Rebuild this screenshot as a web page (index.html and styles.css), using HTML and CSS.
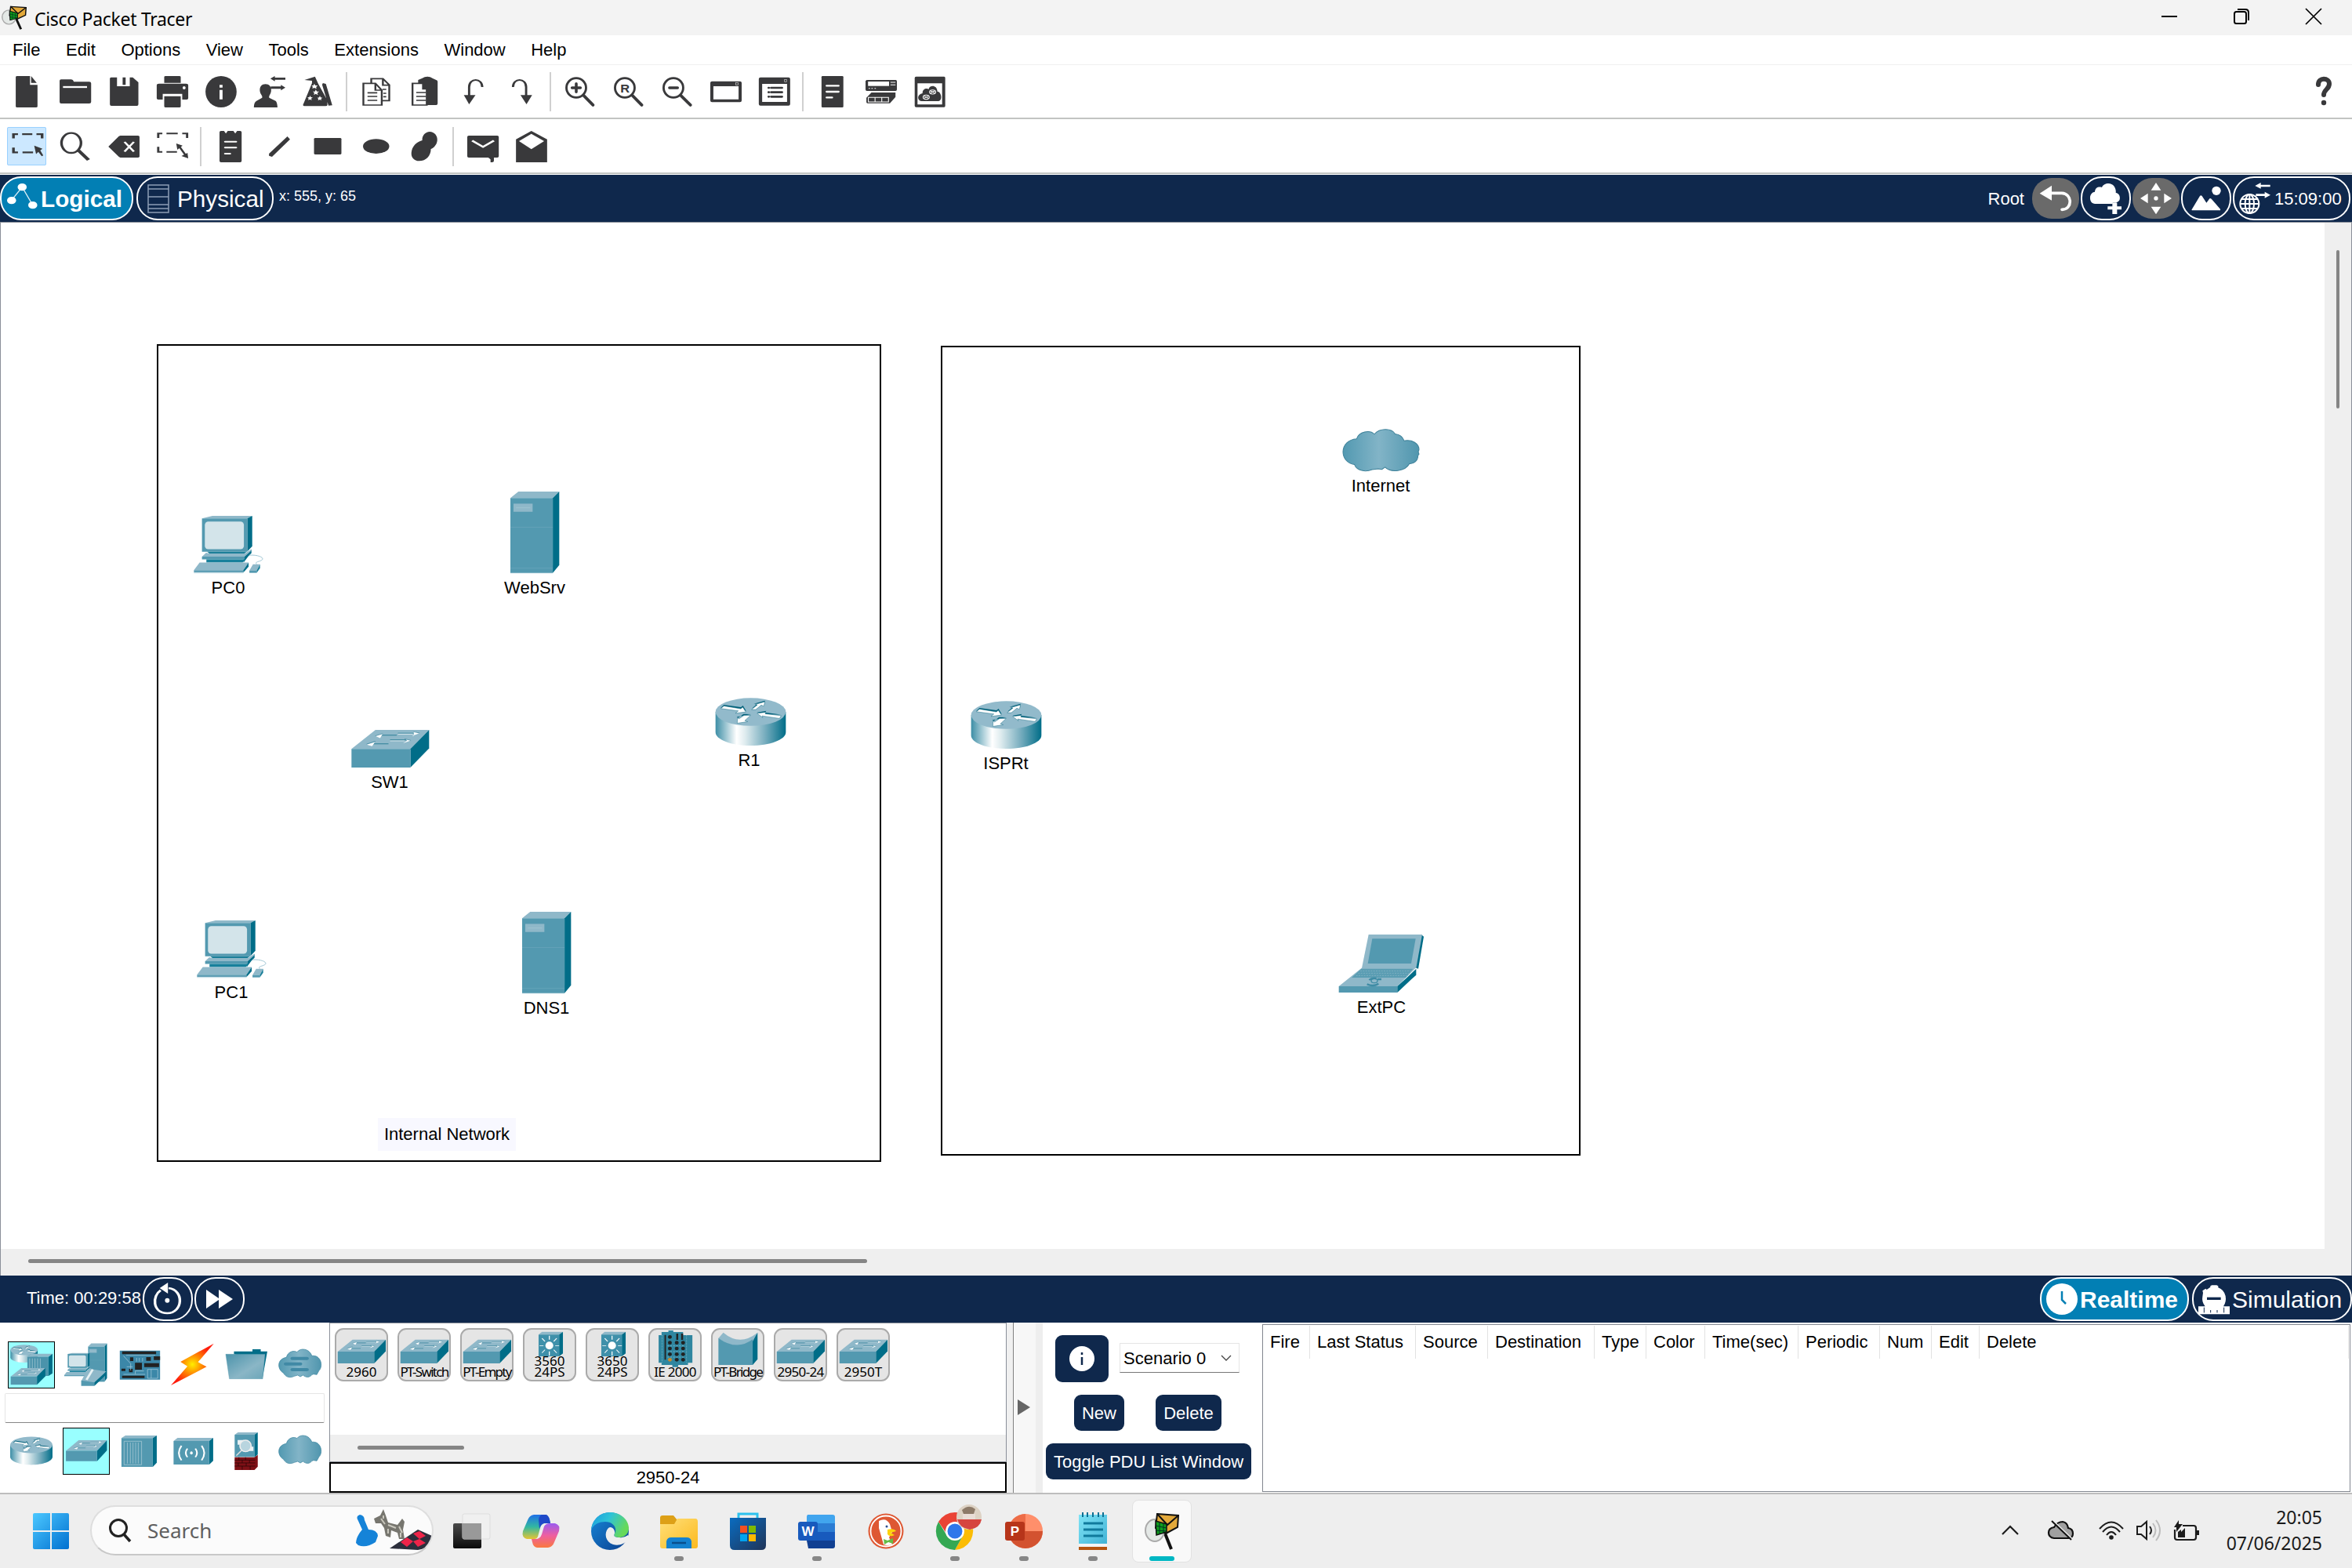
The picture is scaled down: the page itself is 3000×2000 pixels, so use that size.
FILE: index.html
```html
<!DOCTYPE html>
<html lang="en">
<head>
<meta charset="utf-8">
<title>Cisco Packet Tracer</title>
<link rel="stylesheet" href="styles.css">
</head>
<body>
<svg class="defs" aria-hidden="true">
  <defs>
    <linearGradient id="gRouter" x1="0" x2="1" y1="0" y2="0">
      <stop offset="0" stop-color="#3d8ea6"/><stop offset=".3" stop-color="#fff"/><stop offset=".42" stop-color="#dfecef"/><stop offset=".7" stop-color="#79aebf"/><stop offset="1" stop-color="#006d88"/>
    </linearGradient>
    <linearGradient id="gCloud" x1="0" x2="1" y1="0" y2="0">
      <stop offset="0" stop-color="#5299b1"/><stop offset=".47" stop-color="#82b4c7"/><stop offset="1" stop-color="#5096ae"/>
    </linearGradient>
    <linearGradient id="gFolder" x1="0" x2="1" y1="0" y2="1">
      <stop offset="0" stop-color="#4b93ab"/><stop offset=".6" stop-color="#8ab6c6"/><stop offset="1" stop-color="#6aa5b8"/>
    </linearGradient>
    <radialGradient id="gBolt" cx=".5" cy=".5" r=".5">
      <stop offset="0" stop-color="#ffee00"/><stop offset=".45" stop-color="#ff8a00"/><stop offset="1" stop-color="#ff1c0c"/>
    </radialGradient>
    <linearGradient id="gWin" x1="0" x2="1" y1="0" y2="1"><stop offset="0" stop-color="#4cc8ff"/><stop offset="1" stop-color="#0070d0"/></linearGradient>
    <linearGradient id="gCopA" x1="0" x2="0" y1="0" y2="1"><stop offset="0" stop-color="#1f6fe8"/><stop offset=".5" stop-color="#32b8a0"/><stop offset="1" stop-color="#e8c531"/></linearGradient>
    <linearGradient id="gCopB" x1="0" x2="0" y1="0" y2="1"><stop offset="0" stop-color="#9a5cf0"/><stop offset=".5" stop-color="#ee5fa0"/><stop offset="1" stop-color="#f9793f"/></linearGradient>
    <linearGradient id="gEdge" x1="0" x2="1" y1="0" y2=".4"><stop offset="0" stop-color="#1a9be0"/><stop offset=".5" stop-color="#2fc3d6"/><stop offset="1" stop-color="#66d95a"/></linearGradient>
    <linearGradient id="gEdge2" x1="0" x2="1" y1="0" y2="1"><stop offset="0" stop-color="#1787d8"/><stop offset="1" stop-color="#0b3f8f"/></linearGradient>
    <linearGradient id="gFold" x1="0" x2="1" y1="0" y2="1"><stop offset="0" stop-color="#ffe07a"/><stop offset="1" stop-color="#fcb91f"/></linearGradient>
    <linearGradient id="gStore" x1="0" x2="1" y1="0" y2="1"><stop offset="0" stop-color="#0a6cc0"/><stop offset="1" stop-color="#1f3458"/></linearGradient>
    <linearGradient id="gTaskA" x1="0" x2="0" y1="0" y2="1"><stop offset="0" stop-color="#4a4a4a"/><stop offset="1" stop-color="#0c0c0c"/></linearGradient>
    <linearGradient id="gNote" x1="0" x2="1" y1="0" y2="1"><stop offset="0" stop-color="#7fe3f5"/><stop offset="1" stop-color="#41b3d6"/></linearGradient>
  </defs>

  <symbol id="pc" viewBox="80 172 268 226" preserveAspectRatio="none">
    <path fill="#8fb8c9" d="M112 185 152 175H305L286 185Z"/>
    <path fill="#006d88" d="M286 185 305 175V292L286 312Z"/>
    <path fill="#5399b0" d="M112 185H286V313H112Z"/>
    <rect x="123" y="197" width="150" height="106" rx="13" fill="#d3e4ea"/>
    <path fill="#1c7f99" d="M132 313H284L275 320H140Z"/>
    <path fill="#006d88" d="M302 304V318L290 330 272 354V332Z"/>
    <path fill="#8fb8c9" d="M128 317 139 320H277L302 303V308L276 332H112Z"/>
    <path fill="#5399b0" d="M112 332H276V342H112Z"/>
    <path fill="#17809b" d="M129 342H280L268 354H129Z"/>
    <path fill="#8fb8c9" d="M103 354H291L271 384H81Z"/>
    <path fill="#5f9fb5" d="M81 384H271V393H81Z"/>
    <path fill="#c4dde6" d="M81 393H271V396H81Z"/>
    <path fill="#006d88" d="M291 354V370L271 393V384Z"/>
    <path fill="none" stroke="#9fc6d4" stroke-width="3" d="M294 326C330 324 350 336 344 343 336 352 312 350 322 361"/>
    <path fill="#8fb8c9" d="M308 361H335L322 385H294Z"/>
    <path fill="#5399b0" d="M294 385H322V394H294Z"/>
    <path fill="#1c7f99" d="M335 361V376L322 394V385Z"/>
  </symbol>

  <symbol id="server" viewBox="1290 81 194 317" preserveAspectRatio="none">
    <path fill="#8fb8c9" d="M1293 109 1324 84H1482L1457 109Z"/>
    <path fill="#006d88" d="M1457 109 1482 84V364L1457 394Z"/>
    <path fill="#5399b0" d="M1293 109H1457V395H1293Z"/>
    <path fill="#8fb8c9" d="M1305 130H1379V161H1305Z"/>
    <path stroke="#a9cad6" stroke-width="2" d="M1315 146H1370"/>
    <path stroke="#6ba8bc" stroke-width="2" d="M1293 220H1457M1293 376H1457"/>
    <path stroke="#c4dde6" stroke-width="2" d="M1293 395H1457"/>
  </symbol>

  <symbol id="switch" viewBox="682 993 304 149" preserveAspectRatio="none">
    <path fill="#8fb8c9" d="M686 1068 778 996H984L912 1068Z"/>
    <path fill="#006d88" d="M912 1068 984 996V1066L912 1139Z"/>
    <path fill="#5399b0" d="M686 1068H912V1139H686Z"/>
    <path stroke="#2f7f98" stroke-width="3" d="M800 1016H860M770 1049H828M864 1009H930M834 1034H900"/>
    <path stroke="#d3e4ea" stroke-width="3" d="M864 1012H922M834 1038H890"/>
    <path fill="#fff" d="M777 1019 806 1010 796 1027ZM744 1052 776 1042 765 1058ZM947 1009 925 1002V1019H918ZM914 1036 893 1030 900 1036 884 1047Z"/>
    <path fill="none" stroke="#2f7f98" stroke-width="2" d="M777 1019 806 1010M744 1050 778 1039M924 1003 947 1008M890 1030 914 1036"/>
  </symbol>

  <symbol id="router" viewBox="95 88 273 188" preserveAspectRatio="none">
    <path fill="url(#gRouter)" d="M97 145V222C97 250 157 273 231 273S366 250 366 222V145Z"/>
    <ellipse cx="231.500" cy="145" rx="134.500" ry="53" fill="#92bacb"/>
    <path fill="#006079" d="M117 129 129 118 194 127 202 121 214 141ZM237 131 257 113 243 114 286 102 284 116ZM347 155 275 155 256 147 291 141 287 147ZM233 154 204 153 183 168 178 164Z"/>
    <path fill="#fff" stroke="#1d7088" stroke-width="1.500" d="M117 132 129 122 194 133 201 127 213 145 173 150 184 141ZM235 136 257 118 249 116 286 106 282 123 272 119 251 136ZM348 159 342 170 275 160 278 167 256 150 289 146 287 152ZM231 158 206 158 187 171 181 168 180 188 220 182 209 178Z"/>
  </symbol>

  <symbol id="cloud" viewBox="94 50 297 166" preserveAspectRatio="none">
    <path fill="url(#gCloud)" stroke="#3e8199" stroke-width="3" d="M141 188C112 184 97 162 97 140 98 112 118 94 149 91 158 62 200 56 217 73 238 48 285 50 296 72 316 74 326 84 331 98 362 93 388 108 388 132L385 140 388 148 384 154C384 174 368 186 351 185 336 214 280 220 258 198L246 206 232 204 208 207C184 217 150 212 141 188Z"/>
  </symbol>

  <symbol id="laptop" viewBox="50 66 330 228" preserveAspectRatio="none">
    <path fill="#006d88" d="M368 69 377 77 356 200 345 196Z"/>
    <path fill="#8fb8c9" d="M166 69H371L348 197H140Z"/>
    <path fill="#5399b0" d="M180 85H346L329 180H163Z"/>
    <path fill="#8fb8c9" d="M142 195H348L276 267H52Z"/>
    <path fill="#5a9db3" d="M138 200H336L308 234H101Z"/>
    <path stroke="#8fb8c9" stroke-width="2" stroke-dasharray="6 4" d="M134 208H328M126 217H320M118 226H312"/>
    <path fill="#5399b0" d="M52 267H276V291H52Z"/>
    <path fill="#006d88" d="M348 200V224L330 240 276 291V267L310 236Z"/>
    <ellipse cx="188" cy="246" rx="12" ry="8" fill="none" stroke="#3f8ca5" stroke-width="4"/>
    <path fill="none" stroke="#3f8ca5" stroke-width="7" d="M168 243Q178 234 196 237M200 240H215M160 259Q184 270 204 257"/>
  </symbol>

  <symbol id="tracer" viewBox="0 0 44 48" preserveAspectRatio="none">
    <path d="M24 22 34 47" stroke="#111" stroke-width="4"/>
    <ellipse cx="13" cy="23" rx="12" ry="14" fill="#e4e8e6" stroke="#aaa" stroke-width="2"/>
    <path fill="#e3a93a" stroke="#111" stroke-width="2" d="M16 2 43 4 42 19 27 27 14 20Z"/>
    <path fill="none" stroke="#111" stroke-width="2" d="M16 2 29 16 43 4"/>
    <path fill="#0e9d1c" stroke="#111" stroke-width="1.500" d="M14 11 28 15V25L15 29Z"/>
    <path stroke="#032" stroke-width="1" d="M14 17 28 20M14 23 28 24M19 12V27M24 14V26"/>
  </symbol>

  <symbol id="layer3" viewBox="73 292 52 96" preserveAspectRatio="none">
    <path fill="#8fb8c9" d="M75 304 82 293H125L117 304Z"/><path fill="#006d88" d="M117 304 125 293V376L117 387Z"/><path fill="#3f90aa" d="M75 304H117V387H75Z"/>
    <path stroke="#fff" stroke-width="2" d="M97 308V323M97 368V384M77 346H85M109 346H117M82 318 88 330M112 318 106 330M82 374 88 362M112 374 106 362"/>
    <ellipse cx="97" cy="346" rx="8" ry="15" fill="#fff"/>
  </symbol>
</svg>

<div class="app">
  <header class="titlebar">
    <svg class="title-icon" width="32" height="31"><use href="#tracer"/></svg>
    <span class="title-text">Cisco Packet Tracer</span>
    <div class="window-controls">
      <svg width="20" height="20" viewBox="0 0 20 20"><path d="M0 10H20" stroke="#000" stroke-width="2"/></svg>
      <svg width="20" height="20" viewBox="0 0 20 20"><g fill="none" stroke="#000" stroke-width="2"><rect x="1" y="4" width="15" height="15" rx="2.500"/><path d="M5 1H15Q19 1 19 5V15"/></g></svg>
      <svg width="20" height="20" viewBox="0 0 20 20"><path d="M0 0 20 20M20 0 0 20" stroke="#000" stroke-width="1.700"/></svg>
    </div>
  </header>

  <nav class="menubar">
    <span>File</span><span>Edit</span><span>Options</span><span>View</span><span>Tools</span><span>Extensions</span><span>Window</span><span>Help</span>
  </nav>

  <div class="toolbar">
    <div class="tool"><svg preserveAspectRatio="none" viewBox="29.3 291 83.600 120"><path d="M46 291H80V325H100V407Q100 411 96 411H46Q42 411 42 407V295Q42 291 46 291ZM83 291 98 317H83Z"/></svg></div>
    <div class="tool"><svg preserveAspectRatio="none" viewBox="158.9 291 83.600 120"><path d="M159 309Q159 304 163 304H190Q195 304 197 313H238Q243 313 243 319V390Q243 396 238 396H163Q159 396 159 390Z"/><path d="M168 333H232" class="w" stroke-width="7"/></svg></div>
    <div class="tool"><svg preserveAspectRatio="none" viewBox="288.5 291 83.600 120"><path d="M296 296H312V330H346V296H354L369 315V399Q369 405 365 405H297Q293 405 293 399V301Q293 296 296 296ZM327 296H335V325H327Z"/></svg></div>
    <div class="tool"><svg preserveAspectRatio="none" viewBox="418.200 291 83.600 120"><path d="M438 294Q438 291 442 291H478Q482 291 482 294V317H438ZM418 326Q418 320 424 320H496Q502 320 502 326V376Q502 381 498 381H486V359H434V381H422Q418 381 418 376ZM438 368H482V407Q482 411 478 411H442Q438 411 438 407Z"/><ellipse cx="491" cy="336" rx="4" ry="6" fill="#fff"/></svg></div>
    <div class="tool"><svg preserveAspectRatio="none" viewBox="547.800 291 83.600 120"><ellipse cx="589.500" cy="351" rx="41.500" ry="60"/><path d="M589.500 325V335M589.500 344V380" class="w" stroke-width="8"/></svg></div>
    <div class="tool"><svg preserveAspectRatio="none" viewBox="677.400 291 83.600 120"><path d="M708 322C718 322 724 332 723 348 722 362 716 366 718 374L735 386Q739 390 740 411H677Q677 392 684 386L699 374C701 366 694 362 693 348 692 332 698 322 708 322ZM721 301 733 291V297H761V305H733V311ZM761 335 749 346V340H722V331H749V325Z"/></svg></div>
    <div class="tool"><svg preserveAspectRatio="none" viewBox="807 291 83.600 120"><path d="M812 306 840 293 849 322 873 384V402Q873 406 868 406H812Q808 406 808 401L812 388 832 318V309ZM861 318 869 321 886 403 876 404 859 324Z"/><path fill="#fff" d="M838 320 841 327 847 327 843 333 844 340 838 336 833 339 834 332 831 327H836ZM842 343 845 350 851 350 846 356 848 364 842 359 837 363 838 355 834 350H840ZM827 366 829 372 834 373 830 377 831 384 827 380 822 383 823 377 820 373 825 372ZM853 367 855 373 860 374 856 378 857 384 853 381 848 384 849 378 846 374 851 373Z"/></svg></div>
    <i class="sep"></i>
    <div class="tool"><svg preserveAspectRatio="none" viewBox="961.700 291 83.600 120"><g fill="#fff" stroke="#39393b" stroke-width="5"><path d="M990 301H1021L1038 325V385H990ZM1021 301V326H1038"/><path d="M969 319H1001L1018 345V402H969ZM1001 319V345H1018"/></g><path d="M980 355H1006M980 369H1006M980 384H1006M1020 342H1030M1022 357H1030M1022 370H1030" class="k" stroke-width="5"/></svg></div>
    <div class="tool"><svg preserveAspectRatio="none" viewBox="1091.300 291 83.600 120"><path d="M1115 306 1125 300Q1140 286 1154 300L1163 306Q1167 307 1167 312V396Q1167 402 1163 402H1115Z"/><path d="M1100 319H1128L1138 340V402H1100ZM1128 319V340H1138" fill="#fff" stroke="#39393b" stroke-width="5"/><path d="M1110 354H1136M1110 369H1136M1110 384H1136" class="k" stroke-width="5"/></svg></div>
    <div class="tool"><svg preserveAspectRatio="none" viewBox="1221 291 83.600 120"><path d="M1251 370V333C1251 297 1286 297 1286 333" class="k" stroke-width="6"/><path d="M1237 364H1268L1251 399Z"/></svg></div>
    <div class="tool"><svg preserveAspectRatio="none" viewBox="1350.600 291 83.600 120"><path d="M1368 333C1368 297 1403 297 1403 333V370" class="k" stroke-width="6"/><path d="M1388 364H1419L1404 399Z"/></svg></div>
    <i class="sep"></i>
    <div class="tool"><svg preserveAspectRatio="none" viewBox="56 291 112 120"><ellipse cx="98" cy="336" rx="35" ry="37" class="k" stroke-width="8"/><path d="M125 366 158 402" class="k r" stroke-width="11"/><path d="M83 336H113M98 320V352" class="k r" stroke-width="10"/></svg></div>
    <div class="tool"><svg preserveAspectRatio="none" viewBox="229.600 291 112 120"><ellipse cx="271.500" cy="336" rx="35" ry="37" class="k" stroke-width="8"/><path d="M299 366 332 402" class="k r" stroke-width="11"/><text x="272" y="353" class="reset">R</text></svg></div>
    <div class="tool"><svg preserveAspectRatio="none" viewBox="403.200 291 112 120"><ellipse cx="445" cy="336" rx="35" ry="37" class="k" stroke-width="8"/><path d="M472 366 506 402" class="k r" stroke-width="11"/><path d="M431 336H460" class="k r" stroke-width="10"/></svg></div>
    <div class="tool"><svg preserveAspectRatio="none" viewBox="577 291 112 120"><path fill-rule="evenodd" d="M583 311H683Q689 311 689 317V385Q689 391 683 391H583Q577 391 577 385V317Q577 311 583 311ZM588 330V380H678V330Z"/><rect x="668" y="316" width="8" height="9" fill="none" stroke="#ccc" stroke-width="2"/></svg></div>
    <div class="tool"><svg preserveAspectRatio="none" viewBox="750.400 291 112 120"><path fill-rule="evenodd" d="M756 296H856Q862 296 862 302V398Q862 404 856 404H756Q750 404 750 398V302Q750 296 756 296ZM762 321V390H851V321Z"/><path d="M794 336H833M794 353H833M794 370H833M785 336H786M785 353H786M785 370H786" class="k r" stroke-width="8"/><rect x="842" y="304" width="7" height="9" fill="none" stroke="#ccc" stroke-width="2"/></svg></div>
    <i class="sep"></i>
    <div class="tool"><svg preserveAspectRatio="none" viewBox="957.600 291 112 120"><rect x="974" y="291" width="78" height="120" rx="4"/><path d="M992 328H1035M992 351H1035M992 373H1012" class="w r" stroke-width="7"/></svg></div>
    <div class="tool"><svg preserveAspectRatio="none" viewBox="1131 291 112 120"><path d="M1135 306H1239Q1243 306 1243 311V343Q1243 348 1238 348H1136Q1131 348 1131 343V310ZM1152 354H1238V371L1218 395H1138Q1134 395 1134 390V374Z"/><path fill="#fff" d="M1140 312H1215V329H1140Z"/><path class="w" stroke-width="3" d="M1220 315H1238M1220 325H1238M1142 338H1147M1152 338H1157M1163 338H1168M1141 373H1213V390H1141ZM1165 373V390M1189 373V390"/></svg></div>
    <div class="tool"><svg preserveAspectRatio="none" viewBox="1305 291 112 120"><path fill-rule="evenodd" d="M1312 293H1412Q1416 293 1416 298V405Q1416 410 1412 410H1312Q1307 410 1307 405V298Q1307 293 1312 293ZM1317 319V400H1405V319Z"/><path d="M1331 387C1315 385 1315 360 1335 357 1334 340 1349 336 1357 341 1359 326 1386 322 1388 350 1402 350 1408 384 1392 387Z"/><g class="w" stroke-width="3"><ellipse cx="1371" cy="352" rx="11" ry="8"/><ellipse cx="1348" cy="372" rx="11" ry="8"/><path d="M1363 348 1379 356M1363 356 1379 348M1340 368 1356 376M1340 376 1356 368"/></g></svg></div>
    <div class="tool help"><svg viewBox="0 0 40 40"><path d="M13 11C13 1 27 2 27 10 27 17 20 17 20 24" class="k r" stroke-width="6"/><circle cx="20" cy="34" r="3.200"/></svg></div>
  </div>

  <div class="toolbar second">
    <div class="tool"><svg class="selected" preserveAspectRatio="none" viewBox="21 490 104 145"><path d="M38 533V517H50M61 517H88M99 517H114V533M38 568V586H50M62 586H90" class="k" stroke-width="7"/><path d="M93 560 115 572 109 578 117 597 113 600 104 584 98 592Z"/></svg></div>
    <div class="tool"><svg preserveAspectRatio="none" viewBox="158.900 501 83.600 120"><ellipse cx="190" cy="547" rx="26" ry="38" class="k" stroke-width="7"/><path d="M209 575 236 612" class="k" stroke-width="10"/></svg></div>
    <div class="tool"><svg preserveAspectRatio="none" viewBox="288.500 501 83.600 120"><path d="M289 561 317 521 321 519H368Q372 519 372 524V598Q372 603 368 603H321L317 600Z"/><path d="M332 543 357 580M357 543 332 580" class="w" stroke-width="6"/></svg></div>
    <div class="tool"><svg preserveAspectRatio="none" viewBox="418.200 501 83.600 120"><path d="M422 528V511H433M444 511H474M486 511H499V528M422 562V581H433M444 581H472M476 556 496 596" class="k" stroke-width="6"/><path d="M470 549 487 557 473 573ZM500 585 502 606 484 597Z"/></svg></div>
    <i class="sep"></i>
    <div class="tool"><svg preserveAspectRatio="none" viewBox="572.500 501 83.600 120"><path d="M589 501H597L602 511 607 501H622L627 511 632 501H640Q644 501 644 506V616Q644 621 640 621H589Q585 621 585 616V506Q585 501 589 501Z"/><path d="M600 542H629M600 565H629M600 588H613" class="w r" stroke-width="6"/></svg></div>
    <div class="tool"><svg preserveAspectRatio="none" viewBox="702.100 501 83.600 120"><path d="M766 522 773 533 725 600 717 596V588Z"/></svg></div>
    <div class="tool"><svg preserveAspectRatio="none" viewBox="831.700 501 83.600 120"><rect x="837" y="528" width="73" height="63" rx="4"/></svg></div>
    <div class="tool"><svg preserveAspectRatio="none" viewBox="961.700 501 83.600 120"><ellipse cx="1003" cy="560" rx="35" ry="28"/></svg></div>
    <div class="tool"><svg preserveAspectRatio="none" viewBox="1091.300 501 83.600 120"><path d="M1146 504C1158 504 1167 519 1166 537 1165 554 1157 566 1149 570 1149 596 1136 616 1118 616 1104 616 1096 602 1097 584 1099 560 1110 543 1126 537 1125 519 1134 505 1146 504Z"/></svg></div>
    <i class="sep"></i>
    <div class="tool"><svg preserveAspectRatio="none" viewBox="1246 501 83.600 120"><path d="M1250 519H1326Q1330 519 1330 524V598Q1330 603 1326 603H1317V616Q1317 621 1312 621H1308V610L1302 603H1250Q1246 603 1246 598V524Q1246 519 1250 519Z"/><path d="M1259 538 1288 562 1317 538" class="w" stroke-width="7"/></svg></div>
    <div class="tool"><svg preserveAspectRatio="none" viewBox="1375.700 501 83.600 120"><path d="M1376 533 1417 501 1459 533V621H1376Z"/><path fill="#fff" d="M1384 540 1417 512 1451 540 1417 571Z"/></svg></div>
  </div>

  <div class="navbar">
    <button class="pill active logical"><svg width="40" height="40" viewBox="19 699 83 120" preserveAspectRatio="none"><path d="M31 766 59 716 87 785" fill="none" stroke="#dceef5" stroke-width="3"/><g fill="#fff"><ellipse cx="59" cy="716" rx="12" ry="14"/><ellipse cx="31" cy="767" rx="12" ry="14"/><ellipse cx="87" cy="785" rx="12" ry="14"/></g></svg>Logical</button>
    <button class="pill physical"><svg width="28" height="37" viewBox="0 0 28 37"><path fill="none" stroke="#8d9db5" stroke-width="1.500" d="M1 1H27V36H1ZM1 6H27M1 16H27M1 26H27M1 31H27"/></svg>Physical</button>
    <span class="coords">x: 555, y: 65</span>
    <span class="root">Root</span>
    <div class="pill-gray"><svg width="60" height="52" viewBox="276 681 180 156"><path fill="#fff" d="M305 740 351 710V767Z"/><path fill="none" stroke="#fff" stroke-width="11" stroke-linecap="round" d="M345 739H390C430 741 432 802 390 802"/></svg></div>
    <button class="pill icon"><svg width="60" height="52" viewBox="468 681 180 156"><path fill="#fff" d="M517 780C500 778 497 765 498 753 500 741 508 735 516 734 517 718 530 713 543 717 550 700 578 696 590 713 596 722 597 730 596 737 616 741 615 768 604 772L598 776H584V780Z"/><path fill="#fff" d="M583 777H601V790H618V802H601V819H583V802H565V790H583Z"/></svg></button>
    <div class="pill-gray"><svg width="60" height="52" viewBox="660 681 180 156"><path fill="#fff" d="M750 699 769 728H731ZM750 820 769 791H731ZM690 759 719 740V778ZM810 759 781 740V778Z"/><circle cx="750" cy="759" r="8" fill="#fff"/></svg></div>
    <button class="pill icon"><svg width="60" height="52" viewBox="852 681 180 156"><circle cx="981" cy="730" r="17" fill="#fff"/><path fill="#fff" d="M886 803 918 750Q922 745 926 750L943 776 955 760Q958 757 962 761L996 800V805H888Z"/></svg></button>
    <button class="pill clock"><svg width="40" height="40" viewBox="1069 699 120 120"><g fill="none" stroke="#fff" stroke-width="6"><circle cx="1109" cy="780" r="36"/><ellipse cx="1109" cy="780" rx="17" ry="36"/><path d="M1109 744V816M1072 780H1146M1078 762H1140M1078 798H1140"/><path stroke-width="8" d="M1144 711H1188M1133 746H1175"/></g><path fill="#fff" d="M1130 711 1152 699V722ZM1189 746 1167 734V758Z"/></svg>15:09:00</button>
  </div>

  <main class="workspace">
    <div class="canvas">
      <div class="frame internal"></div>
      <div class="frame external"></div>
      <div class="node pc0"><svg width="89" height="75"><use href="#pc"/></svg><span>PC0</span></div>
      <div class="node websrv"><svg width="64" height="106"><use href="#server"/></svg><span>WebSrv</span></div>
      <div class="node sw1"><svg width="101" height="50"><use href="#switch"/></svg><span>SW1</span></div>
      <div class="node r1"><svg width="91" height="63"><use href="#router"/></svg><span>R1</span></div>
      <div class="node pc1"><svg width="89" height="75"><use href="#pc"/></svg><span>PC1</span></div>
      <div class="node dns1"><svg width="64" height="106"><use href="#server"/></svg><span>DNS1</span></div>
      <div class="node isprt"><svg width="91" height="63"><use href="#router"/></svg><span>ISPRt</span></div>
      <div class="node internet"><svg width="99" height="56"><use href="#cloud"/></svg><span>Internet</span></div>
      <div class="node extpc"><svg width="110" height="76"><use href="#laptop"/></svg><span>ExtPC</span></div>
      <div class="note">Internal Network</div>
    </div>
    <div class="vscroll"><div class="vthumb"></div></div>
    <div class="hscroll"><div class="hthumb"></div></div>
  </main>

  <div class="timebar">
    <span class="time">Time: 00:29:58</span>
    <button class="pill icon"><svg width="40" height="42" viewBox="462 110 95 126" preserveAspectRatio="none"><path fill="none" stroke="#fff" stroke-width="8" d="M488 139C462 160 462 226 508 227 556 226 560 138 512 131"/><path fill="#fff" d="M485 131 510 110V152Z"/><ellipse cx="508" cy="178" rx="7" ry="9" fill="#fff"/></svg></button>
    <button class="pill icon"><svg width="34" height="24" viewBox="0 0 34 24"><path fill="#fff" d="M0 0 16 11V0L34 12 16 24V13L0 24Z"/></svg></button>
    <button class="pill active realtime"><svg width="40" height="40" viewBox="0 0 40 40"><circle cx="20" cy="20" r="20" fill="#fff"/><path d="M20 10V21L25 26" fill="none" stroke="#027fb4" stroke-width="2.500"/></svg>Realtime</button>
    <button class="pill simulation"><svg width="40" height="40" viewBox="912 110 120 120"><path fill="#fff" d="M958 124V120L964 117H982L988 120V126Q1010 134 1016 158 1020 180 1008 198H1032V228H912V198H938Q924 180 928 160L930 146 928 138 940 130 944 134Z"/><path stroke="#0f284c" stroke-width="10" d="M945 168H998"/><path stroke="#0f284c" stroke-width="3" d="M934 202V222M1010 202V222M959 212V222M984 212V222"/></svg>Simulation</button>
  </div>

  <section class="dock">
    <div class="palette">
      <div class="tiles">
        <svg class="tile on" preserveAspectRatio="none" viewBox="23.800 333 142.500 180"><use href="#router" x="31" y="344" width="84" height="71"/><path fill="#8fb8c9" d="M83 392 96 380H159L147 392Z"/><path fill="#006d88" d="M147 392 159 380V455L147 465Z"/><path fill="#4a93ab" d="M83 392H147V465H83Z"/><path stroke="#a9cad6" stroke-width="2" d="M90 398V440M98 398V440M106 398V440M114 398V440M122 398V440"/><use href="#switch" x="31" y="434" width="107" height="66"/></svg>
        <svg class="tile" preserveAspectRatio="none" viewBox="190 333 142.500 180"><use href="#server" x="266" y="339" width="59" height="150"/><use href="#pc" x="194" y="376" width="92" height="92"/><path fill="#8fb8c9" d="M264 443 272 436 283 440 312 446 322 448 286 500H247V482Z"/><path fill="#5399b0" d="M246 482 286 490V503H246Z"/><path fill="#006d88" d="M286 490 322 448V460L286 503Z"/><path stroke="#e8f2f5" stroke-width="7" d="M262 480 281 440"/></svg>
        <svg class="tile" preserveAspectRatio="none" viewBox="351.600 333 142.500 180"><path fill="#3b87a8" d="M363 368H485V479H363Z"/><path fill="#222" d="M370 371H473V382H370ZM370 464H438V473H370ZM409 415H430V441H409ZM443 393H457V407H443ZM466 390H485V404H466ZM437 416H482V431H437ZM394 394H404V408H394ZM391 438H402V451H391ZM368 437H380V446H368Z"/><path stroke="#a3c9d8" stroke-width="2" fill="none" d="M374 388 396 418V444M414 396V410M422 396V410M432 396V410M447 440H478V474H447ZM384 430H402M436 446H410V458M458 440V474M374 459H440M382 386H470"/></svg>
        <svg class="tile" preserveAspectRatio="none" viewBox="513.200 333 142.500 180"><path fill="url(#gBolt)" d="M648 341 600 412 626 430 518 501 568 428 547 411Z"/></svg>
        <svg class="tile" preserveAspectRatio="none" viewBox="674.700 333 142.500 180"><path fill="#006d88" d="M709 382V371H765V363H790V371H810L795 476 770 400Z"/><path fill="url(#gFolder)" stroke="#4f93aa" stroke-width="1" d="M684 382H803L796 476H695Z"/></svg>
        <svg class="tile" preserveAspectRatio="none" viewBox="836.300 333 142.500 180"><path fill="url(#gCloud)" stroke="#4389a2" stroke-width="2" d="M859 454C840 440 838 400 868 394 872 372 890 366 900 374 910 356 938 360 945 388 974 384 980 430 966 446L960 460 950 458 946 460C938 472 928 472 918 462L910 468 902 462 892 466C878 474 866 470 859 454Z"/><path stroke="#4089a5" stroke-width="12" stroke-linecap="round" d="M886 398H930M866 419H910M886 441H930"/></svg>
      </div>
      <div class="filter"></div>
      <div class="tiles">
        <svg class="tile" preserveAspectRatio="none" viewBox="23.800 663 142.500 180"><use href="#router" x="30" y="695" width="130" height="112"/></svg>
        <svg class="tile on" preserveAspectRatio="none" viewBox="190 663 142.500 180"><use href="#switch" x="198" y="709" width="127" height="84"/></svg>
        <svg class="tile" preserveAspectRatio="none" viewBox="351.600 663 142.500 180"><path fill="#8fb8c9" d="M368 703 380 693H475L463 703Z"/><path fill="#006d88" d="M463 703 475 693V797L463 813Z"/><path fill="#5399b0" d="M368 703H463V813H368Z"/><path fill="none" stroke="#a9cad6" stroke-width="2" d="M376 715H429V805H376ZM386 720V800M395 720V800M403 720V800M411 720V800M419 720V800"/></svg>
        <svg class="tile" preserveAspectRatio="none" viewBox="513.200 663 142.500 180"><path fill="#8fb8c9" d="M526 714 538 702H646L634 714Z"/><path fill="#006d88" d="M634 714 646 702V790L634 804Z"/><path fill="#5399b0" d="M526 714H634V804H526Z"/><ellipse cx="580" cy="760" rx="4" ry="6" fill="#fff"/><path fill="none" stroke="#fff" stroke-width="5" d="M568 743Q558 760 568 776M592 743Q602 760 592 776M550 732Q534 760 550 788M611 732Q627 760 611 788"/></svg>
        <svg class="tile" preserveAspectRatio="none" viewBox="674.700 663 142.500 180"><path fill="#8fb8c9" d="M711 690 721 681H781L771 690Z"/><path fill="#5399b0" d="M711 690H771V775H711Z"/><path fill="#006d88" d="M771 690 781 681V766L771 776Z"/><path fill="#7e1016" d="M711 776H771L781 767V812L771 825H711Z"/><path stroke="#2a0507" stroke-width="2" d="M711 787H773M711 798H773M711 810H773M724 776V787M744 776V787M734 787V798M756 787V798M722 798V810M746 798V810M734 810V824M758 810V824"/><path fill="#e9f2f5" d="M720 710H740V728H720ZM750 736H768V752H750Z"/><ellipse cx="744" cy="733" rx="17" ry="22" fill="#b9d5df" stroke="#eee" stroke-width="4"/><path stroke="#ddd" stroke-width="4" d="M732 750 716 770"/></svg>
        <svg class="tile" preserveAspectRatio="none" viewBox="836.300 663 142.500 180"><path fill="url(#gCloud)" stroke="#4389a2" stroke-width="2" d="M859 784C840 770 838 730 868 724 872 702 890 696 900 704 910 686 938 690 945 718 974 714 980 760 966 776L960 790 950 788 946 790C938 802 928 802 918 792L910 798 902 792 892 796C878 804 866 800 859 784Z"/></svg>
      </div>
    </div>

    <div class="devices">
      <div class="device-list">
        <div class="cards">
          <div class="card"><svg preserveAspectRatio="none" viewBox="1015 282 162 144"><use href="#switch" x="1022" y="321" width="149" height="95"/></svg><span>2960</span></div>
          <div class="card"><svg preserveAspectRatio="none" viewBox="1015 282 162 144"><use href="#switch" x="1022" y="321" width="149" height="95"/></svg><span class="tight">PT-Switch</span></div>
          <div class="card"><svg preserveAspectRatio="none" viewBox="1015 282 162 144"><use href="#switch" x="1022" y="321" width="149" height="95"/></svg><span class="tight">PT-Empty</span></div>
          <div class="card two"><svg preserveAspectRatio="none" viewBox="43 282 109 102"><use href="#layer3" x="73" y="292" width="52" height="96"/></svg><span>3560<br>24PS</span></div>
          <div class="card two"><svg preserveAspectRatio="none" viewBox="43 282 109 102"><use href="#layer3" x="73" y="292" width="52" height="96"/></svg><span>3650<br>24PS</span></div>
          <div class="card"><svg preserveAspectRatio="none" viewBox="299 282 109 144"><path fill="#2f86a0" d="M320 306H326V294H340V288H350V294H370V306H389V412H380V420H360V428H348V420H326V412H320Z"/><g fill="#222"><ellipse cx="343" cy="335" rx="4" ry="7"/><ellipse cx="357" cy="335" rx="4" ry="7"/><ellipse cx="370" cy="335" rx="4" ry="7"/><ellipse cx="343" cy="357" rx="4" ry="7"/><ellipse cx="357" cy="357" rx="4" ry="7"/><ellipse cx="370" cy="357" rx="4" ry="7"/><ellipse cx="343" cy="379" rx="4" ry="7"/><ellipse cx="357" cy="379" rx="4" ry="7"/><ellipse cx="370" cy="379" rx="4" ry="7"/><ellipse cx="357" cy="400" rx="4" ry="7"/><ellipse cx="370" cy="400" rx="4" ry="7"/><ellipse cx="343" cy="313" rx="4" ry="7"/><path d="M356 300H360V324H356ZM366 300H370V324H366ZM332 305H335V400H332Z"/></g><ellipse cx="343" cy="400" rx="4" ry="7" fill="#c98a2c"/><path stroke="#8fc0cf" stroke-width="1.500" stroke-dasharray="3 3" d="M327 306V410M377 306V410M338 347H374M338 369H374M338 390H374"/></svg><span class="snug">IE 2000</span></div>
          <div class="card"><svg preserveAspectRatio="none" viewBox="427 282 109 144"><path fill="#006d88" d="M512 322 522 296V398L512 420Z"/><path fill="#8fb8c9" d="M442 318 452 296Q486 350 522 296L512 330Q480 370 442 318Z"/><path fill="#5399b0" d="M442 317Q480 368 512 322V420H442Z"/></svg><span class="tight">PT-Bridge</span></div>
          <div class="card"><svg preserveAspectRatio="none" viewBox="1015 282 162 144"><use href="#switch" x="1022" y="321" width="149" height="95"/></svg><span class="snug">2950-24</span></div>
          <div class="card"><svg preserveAspectRatio="none" viewBox="1015 282 162 144"><use href="#switch" x="1022" y="321" width="149" height="95"/></svg><span>2950T</span></div>
        </div>
        <div class="dscroll"><div class="dthumb"></div></div>
      </div>
      <div class="device-name">2950-24</div>
    </div>

    <div class="splitter"><svg width="16" height="20" viewBox="0 0 16 20"><path fill="#666" d="M0 0 16 10 0 20Z"/></svg></div>

    <div class="scenario">
      <div class="srow first">
        <button class="btn info"><svg width="34" height="34" viewBox="0 0 34 34"><circle cx="17" cy="17" r="16" fill="#fff"/><path d="M17 9V12M17 15V25" stroke="#0f284c" stroke-width="2.500"/></svg></button>
        <div class="select"><span>Scenario 0</span><svg width="14" height="8" viewBox="0 0 14 8"><path d="M1 1 7 7 13 1" fill="none" stroke="#444" stroke-width="1.300"/></svg></div>
      </div>
      <div class="srow second-row"><button class="btn new">New</button><button class="btn delete">Delete</button></div>
      <button class="btn toggle">Toggle PDU List Window</button>
    </div>

    <div class="pdu">
      <div class="pdu-head"><span>Fire</span><span>Last Status</span><span>Source</span><span>Destination</span><span>Type</span><span>Color</span><span>Time(sec)</span><span>Periodic</span><span>Num</span><span>Edit</span><span>Delete</span></div>
    </div>
  </section>

  <footer class="taskbar">
    <svg class="start" width="46" height="46" viewBox="0 0 46 46"><path fill="url(#gWin)" d="M2 0H22V22H0V2Q0 0 2 0ZM24 0H44Q46 0 46 2V22H24ZM0 24H22V46H2Q0 46 0 44ZM24 24H46V44Q46 46 44 46H24Z"/></svg>
    <div class="search">
      <svg width="30" height="30" viewBox="0 0 30 30"><circle cx="13" cy="12" r="10.500" fill="none" stroke="#222" stroke-width="3"/><path d="M20 20 28 29" stroke="#222" stroke-width="3.500"/></svg>
      <span>Search</span>
      <svg class="dog" width="98" height="54" viewBox="0 0 98 54"><path fill="#2c2f3c" d="M44 50 80 26 98 34V42Q92 50 80 52Z"/><path fill="#ee2449" d="M58 42 66 36 74 41 66 48ZM74 31 82 28 90 34 82 38ZM74 41 82 38 90 43 80 48Z"/><path fill="#1583d8" d="M1 43C2 34 6 30 9 26L4 15Q0 9 6 7 12 8 12 14L17 26Q28 26 29 34L26 42Q14 50 4 46Z"/><path fill="#77766f" d="M24 12 32 8 36 0 39 8 42 17 54 20 60 12 63 16 61 26 63 38 56 38 54 30 46 27 45 36 39 34 37 24 33 18 26 18Z"/><path stroke="#c9c7bd" stroke-width="2" d="M33 12 38 19M42 20 52 24M56 22 60 30M42 25V31M36 8V12M58 30V36"/></svg>
    </div>
    <div class="apps">
      <div class="appicon"><svg viewBox="0 0 48 48"><rect x="0" y="14" width="36" height="32" rx="2" fill="url(#gTaskA)"/><rect x="12" y="2" width="35" height="32" rx="2" fill="#f0f0f0" stroke="#ddd"/><path d="M12 14H36V34H12Z" fill="#999"/></svg></div>
      <div class="appicon"><svg viewBox="0 0 48 48"><path fill="url(#gCopA)" d="M15 3H29Q34 4 35 10L36 14H28Q24 15 23 20L20 31Q18 35 12 34H6Q-1 32 1 24L7 10Q9 4 15 3Z"/><path fill="url(#gCopB)" d="M33 45H19Q14 44 13 38L12 34H17Q23 34 25 28L28 18Q30 14 36 14H42Q49 16 47 24L41 38Q39 44 33 45Z"/><path fill="#1f49c8" d="M25 3H31Q35 5 36 14H28Q24 15 22 21L21 10Q21 5 25 3Z"/></svg></div>
      <div class="appicon"><svg viewBox="0 0 48 48"><circle cx="24" cy="24" r="24" fill="url(#gEdge2)"/><path fill="url(#gEdge)" d="M0 22C2 8 12 0 24 0 38 0 48 10 48 20 48 28 42 32 36 32 30 32 28 30 30 27 34 20 28 12 18 12 9 12 3 16 0 22Z"/><path fill="#eee" d="M22 20C16 26 18 38 28 41 36 43 42 40 46 36L49 33 47 29Q42 33 36 32C30 32 28 30 30 27 31 22 26 17 22 20Z"/></svg></div>
      <div class="appicon run"><svg viewBox="0 0 48 48"><path fill="#dda017" d="M0 7Q0 4 3 4H17L22 10V18H0Z"/><path fill="url(#gFold)" d="M0 15H18L22 8H45Q48 8 48 12V43Q48 46 45 46H3Q0 46 0 43Z"/><path fill="#1481cf" d="M8 46V37Q9 32 14 32H34Q39 32 40 37V46Z"/><path stroke="#0a4f8c" stroke-width="2.500" d="M15 39H33"/></svg></div>
      <div class="appicon"><svg viewBox="0 0 48 48"><path fill="none" stroke="#2cc1ee" stroke-width="3" d="M12 12V2H36V12"/><path fill="url(#gStore)" d="M1 7H47V42Q47 48 41 48H7Q1 48 1 42Z"/><path fill="#f25022" d="M14 17H23V26H14Z"/><path fill="#7fba00" d="M25 17H34V26H25Z"/><path fill="#00a4ef" d="M14 28H23V37H14Z"/><path fill="#ffb900" d="M25 28H34V37H25Z"/></svg></div>
      <div class="appicon run"><svg viewBox="0 0 48 48"><path fill="#41a5ee" d="M12 3H44Q47 3 47 6V14H11V5Z"/><path fill="#2b7cd3" d="M11 14H47V25H11Z"/><path fill="#185abd" d="M11 25H47V36H11Z"/><path fill="#103f91" d="M11 36H47V43Q47 46 44 46H13Z"/><rect x="0" y="12" width="25" height="24" rx="3" fill="#185abd"/><text x="12.500" y="30" class="glyph">W</text></svg></div>
      <div class="appicon"><svg viewBox="0 0 48 48"><circle cx="24" cy="24" r="22.500" fill="#de5833"/><circle cx="24" cy="24" r="19.500" fill="none" stroke="#fff" stroke-width="1.800"/><path fill="#fff" d="M15 11Q24 6 29 15L32 25 28 32 32 41Q26 43 21 41L15 20Z"/><path fill="#fdd20a" d="M26 22Q34 20 37 24L30 26 35 29Q29 32 26 28Z"/><path fill="#65bc46" d="M21 34 26 36 33 33V40L27 38 22 41Z"/><circle cx="25" cy="18" r="1.500" fill="#2d4f8e"/></svg></div>
      <div class="appicon run"><svg viewBox="0 0 48 48"><path fill="#fbbc04" d="M24 13H45Q50 24 44 36 37 47 24 48L34 30Z"/><path fill="#34a853" d="M3 12A24 24 0 0 0 24 48L34 30 14 30Z"/><path fill="#ea4335" d="M3 12Q11 0 24 0 38 0 45 13H24L14 28Z"/><circle cx="24" cy="24" r="12" fill="#fff"/><circle cx="24" cy="24" r="9.500" fill="#2f77ea"/><circle cx="42" cy="6" r="16" fill="#ddd2c4"/><path fill="#d6453f" d="M27 9H58Q56 20 43 22 30 20 27 9Z"/><path fill="#8d7a68" d="M33 -3Q42 -11 50 -4L48 2H35Z"/><path fill="#e9ddd6" d="M34 2H50V9H34Z"/></svg></div>
      <div class="appicon run"><svg viewBox="0 0 48 48"><circle cx="26" cy="24" r="22" fill="#ff8f6b"/><path fill="#d35230" d="M26 24H48A22 22 0 0 1 26 46 22 22 0 0 1 4 24Z"/><path fill="#ed6c47" d="M26 24V2A22 22 0 0 0 4 24Z"/><rect x="0" y="12" width="25" height="24" rx="3" fill="#b7351a"/><text x="12.500" y="30" class="glyph">P</text></svg></div>
      <div class="appicon run"><svg viewBox="0 0 48 48"><path fill="url(#gNote)" d="M6 3H42V40H6Z"/><path fill="#f4f4f4" d="M6 40H42V44H6Z"/><path fill="#b5540f" d="M6 44H42V48H6Z"/><path stroke="#0b6f93" stroke-width="2" d="M11 0V6M17 0V6M24 0V6M31 0V6M37 0V6"/><path stroke="#107a9c" stroke-width="3" d="M12 14H37M12 22H37M12 30H37"/></svg></div>
      <div class="appicon current"><svg viewBox="0 0 48 48"><use href="#tracer" x="2" y="0" width="44" height="48"/></svg></div>
    </div>
    <div class="tray">
      <svg width="22" height="13" viewBox="0 0 22 13"><path d="M1 12 11 2 21 12" fill="none" stroke="#1c1c1c" stroke-width="2.200"/></svg>
      <svg width="33" height="26" viewBox="0 0 33 26"><path d="M8 23Q1 22 1 16T8 9Q12 2 19 2 25 3 26 10 32 11 32 17T26 23Z" fill="#a0a0a0" stroke="#111" stroke-width="2.200"/><path d="M7 1 32 25" stroke="#eee" stroke-width="2"/><path d="M5 1 30 25" stroke="#111" stroke-width="2"/></svg>
      <svg width="32" height="24" viewBox="0 0 32 24"><g fill="none" stroke="#1c1c1c" stroke-width="2"><path d="M1 10Q16 -7 31 10M5 14Q16 1 27 14M10 18Q16 10 22 18"/></g><circle cx="16" cy="21" r="2.800" fill="#1c1c1c"/></svg>
      <svg width="33" height="27" viewBox="0 0 33 27"><g fill="none" stroke-width="2"><path stroke="#1c1c1c" d="M1 9H6L13 3V25L6 19H1ZM17 9Q21 14 17 19"/><path stroke="#bdbdbd" d="M21 5Q28 14 21 23M25 1Q35 14 25 27"/></g></svg>
      <svg width="33" height="26" viewBox="0 0 33 26"><path fill="none" stroke="#1c1c1c" stroke-width="2.200" d="M11 7H25Q28 7 28 10V22Q28 25 25 25H4Q1 25 1 22V12"/><path fill="#1c1c1c" d="M28 13H32V19H28ZM5 22V15L9 12V15L14 10V22ZM6 0V5H11L3 15V9H0Z"/></svg>
      <div class="datetime"><span>20:05</span><span>07/06/2025</span></div>
    </div>
  </footer>
</div>
</body>
</html>
```

FILE: styles.css
```css
* { box-sizing: border-box; }
body { margin: 0; background: #fff; }
svg { display: block; flex: none; overflow: visible; }
.defs { position: absolute; width: 0; height: 0; }

.app {
  width: 3000px; height: 2000px; overflow: hidden;
  display: flex; flex-direction: column;
  font: 22px/25px "Liberation Sans", Arial, sans-serif; color: #000;
}
button { border: 0; padding: 0; background: none; color: inherit; font: inherit; white-space: nowrap; }

/* title bar */
.titlebar { height: 45px; flex: none; background: #f3f3f3; display: flex; align-items: center; padding-left: 2px; }
.title-text { font: 23px/30px "Noto Sans", sans-serif; margin: 2px 0 0 10px; letter-spacing: -0.3px; white-space: nowrap; }
.window-controls { margin: -3px 39px 0 auto; display: flex; gap: 72px; }

/* menu */
.menubar { height: 38px; flex: none; display: flex; align-items: center; gap: 32.500px; padding-left: 16px; border-bottom: 1px solid #f0f0f0; }

/* tool bars */
.toolbar { height: 69px; flex: none; display: flex; align-items: center; padding: 1px 0 0 3px; border-bottom: 2px solid #c2c4c2; }
.toolbar.second { height: 70px; margin-bottom: 1px; }
.tool { width: 62px; height: 50px; flex: none; display: flex; align-items: center; justify-content: center; }
.tool svg { width: 40px; height: 40px; fill: #39393b; }
.tool svg.selected { width: 50px; height: 49px; background: #cce8ff; outline: 1px solid #99d1ff; outline-offset: -1px; border-radius: 2px; }
.tool.help { margin: 0 5px 0 auto; }
.k { fill: none; stroke: #39393b; }
.w { fill: none; stroke: #fff; }
.r { stroke-linecap: round; }
.reset { font: bold 46px "Liberation Sans", sans-serif; text-anchor: middle; }
.sep { width: 12px; height: 50px; flex: none; background: linear-gradient(#d0d0d0, #d0d0d0) 4px 0 / 2px 100% no-repeat; }

/* navigation bar */
.navbar, .timebar { height: 60px; flex: none; background: #0f284c; color: #fff; display: flex; align-items: center; }
.pill { height: 56px; border: 2px solid #fff; border-radius: 27px; display: flex; align-items: center; font-size: 29.700px; flex: none; }
.pill.active { background: #027fb4; font-weight: bold; }
.logical { width: 170px; padding-left: 7px; gap: 3px; }
.physical { width: 175px; margin-left: 4px; padding-left: 12px; gap: 10px; }
.coords { font-size: 18px; margin: -5px auto 0 7px; }
.root { margin-right: 8px; }
.pill-gray { width: 60px; height: 52px; border-radius: 25px; background: #6a6a6a; margin: 0 2px; flex: none; }
.pill.icon { width: 64px; justify-content: center; }
.clock { width: 150px; margin: 0 2px; padding-left: 6px; gap: 5px; font-size: 22px; }

/* workspace */
.workspace {
  height: 1344px; flex: none; display: grid;
  grid-template: 1309px 34px / 2964px 34px;
  border: 1px solid #8a8f99; border-bottom: 0;
}
.canvas { position: relative; }
.frame { position: absolute; border: 2px solid #000; }
.frame.internal { left: 199px; top: 155px; width: 924px; height: 1043px; }
.frame.external { left: 1199px; top: 157px; width: 816px; height: 1033px; }
.node { position: absolute; display: flex; flex-direction: column; align-items: center; gap: 5px; width: 120px; }
.node.pc0 { left: 230px; top: 373px; }
.node.websrv { left: 621px; top: 342px; }
.node.sw1 { left: 436px; top: 646px; }
.node.r1 { left: 896px; top: 605px; }
.node.pc1 { left: 234px; top: 889px; }
.node.dns1 { left: 636px; top: 878px; }
.node.isprt { left: 1222px; top: 609px; }
.node.internet { left: 1700px; top: 262px; }
.node.extpc { left: 1701px; top: 907px; }
.r1 span { margin-left: -3px; }
.note { position: absolute; left: 481px; top: 1142px; width: 176px; height: 42px; line-height: 42px; text-align: center; background: #f8f8ff; }
.vscroll, .hscroll { background: #efefef; }
.hscroll { grid-column: 1 / 3; padding: 13px 0 0 35px; }
.vscroll { padding: 35px 0 0 15px; }
.hthumb { width: 1070px; height: 5px; border-radius: 3px; background: #858585; }
.vthumb { width: 4px; height: 202px; border-radius: 2px; background: #858585; }

/* time bar */
.time { margin: -4px 2px 0 34px; width: 146px; white-space: nowrap; }
.timebar .icon { margin-right: 2px; }
.timebar .pill { font-size: 30px; }
.realtime { width: 190px; margin-left: auto; padding-left: 6px; gap: 3px; }
.simulation { width: 204px; margin-left: 4px; padding-left: 6px; gap: 3px; }

/* dock */
.dock { height: 217px; flex: none; display: flex; }
.palette { width: 420px; padding-top: 24px; }
.tiles { display: grid; grid-template-columns: 70px 68px 68px 68px 68px 68px; padding-left: 10px; height: 60px; }
.tile { width: 60px; height: 60px; }
.tile.on { background: #99ffff; outline: 1px solid #000; outline-offset: -1px; }
.filter { margin: 6px 6px; width: 408px; height: 38px; border: 1px solid #e5e5e5; border-bottom-color: #868686; border-radius: 2px; }
.devices { width: 864px; display: flex; flex-direction: column; }
.device-list { height: 178px; border: 1px solid #8a8f99; display: flex; flex-direction: column; justify-content: space-between; }
.cards { display: flex; gap: 12px; padding: 6px 0 0 6px; }
.card {
  width: 68px; height: 68px; flex: none; border: 2px solid #aaa; border-radius: 11px; background: #e5e5e5;
  display: flex; flex-direction: column; align-items: center;
  font: 17px/14px "Noto Sans", sans-serif; text-align: center; white-space: nowrap;
}
.card svg { width: 68px; height: 48px; margin-top: -1px; }
.card.two svg { height: 34px; }
.card .tight { letter-spacing: -1.700px; }
.card .snug { letter-spacing: -0.700px; }
.dscroll { height: 34px; background: #efefef; padding: 14px 0 0 35px; }
.dthumb { width: 136px; height: 5px; border-radius: 3px; background: #858585; }
.device-name { height: 39px; border: 2px solid #000; display: flex; align-items: center; justify-content: center; }
.splitter {
  width: 46px; display: flex; align-items: center; padding: 0 0 0 14px;
  background: linear-gradient(90deg, #f0f0f0 8px, #808080 8px, #808080 9px, #f7f7f7 9px, #f7f7f7 37px, #eeeeee 37px);
}
.splitter svg { margin-top: -1px; }
.scenario { width: 280px; padding: 16px 0 0 4px; }
.srow { display: flex; }
.first { padding-left: 12px; height: 60px; gap: 14px; }
.btn { background: #0f284c; color: #fff; border-radius: 9px; height: 46px; display: flex; align-items: center; justify-content: center; }
.info { width: 68px; height: 60px; }
.select { width: 153px; height: 38px; margin-top: 10px; border: 1px solid #e5e5e5; border-bottom-color: #777; display: flex; align-items: center; justify-content: space-between; padding: 0 9px 0 4px; }
.second-row { padding: 16px 0 16px 36px; gap: 40px; }
.new { width: 64px; }
.delete { width: 84px; }
.toggle { width: 262px; }
.pdu { width: 1388px; height: 214px; margin-top: 2px; border: 1px solid #82868f; }
.pdu-head { display: grid; grid-template-columns: 60px 135px 92px 136px 66px 75px 119px 104px 66px 61px 471px; height: 42px; margin-top: 1px; }
.pdu-head span { padding-left: 9px; line-height: 42px; border-right: 1px solid #e2e2e2; }

/* taskbar */
.taskbar { height: 96px; flex: none; background: #eeeeee; border-top: 2px solid #bdbdbd; display: flex; align-items: center; }
.start { margin-left: 42px; }
.search {
  width: 438px; height: 64px; margin: -2px 0 0 27px; border: 2px solid #dedede; border-bottom-color: #c8c8c8; border-radius: 32px;
  background: #fbfbfb; display: flex; align-items: center; padding-left: 21px; overflow: hidden;
}
.search span { font: 26px/36px "Noto Sans", sans-serif; color: #606060; margin-left: 20px; }
.search .dog { margin: 0 0 0 auto; }
.apps { display: flex; margin-left: 11px; gap: 12px; }
.appicon { width: 76px; height: 80px; border-radius: 8px; display: flex; flex-direction: column; align-items: center; padding-top: 16px; }
.appicon svg { width: 48px; height: 48px; }
.run::after { content: ""; width: 12px; height: 6px; border-radius: 3px; background: #868686; margin-top: 8px; }
.current { background: #f9f9f9; border: 1px solid #e2e2e2; padding-top: 15px; }
.current::after { content: ""; width: 32px; height: 6px; border-radius: 3px; background: #00b7c3; margin-top: 8px; }
.glyph { font: bold 17px "Liberation Sans", sans-serif; fill: #fff; text-anchor: middle; }
.tray { margin: 0 38px 0 auto; display: flex; align-items: center; }
.tray svg { margin-top: -3px; }
.tray svg:nth-child(2) { margin-left: 37px; }
.tray svg:nth-child(3) { margin-left: 32px; }
.tray svg:nth-child(4) { margin-left: 16px; }
.tray svg:nth-child(5) { margin-left: 15px; }
.datetime { width: 156px; display: flex; flex-direction: column; align-items: flex-end; font: 23px/32.500px "Noto Sans", sans-serif; color: #1a1a1a; margin-top: -3px; }
```
